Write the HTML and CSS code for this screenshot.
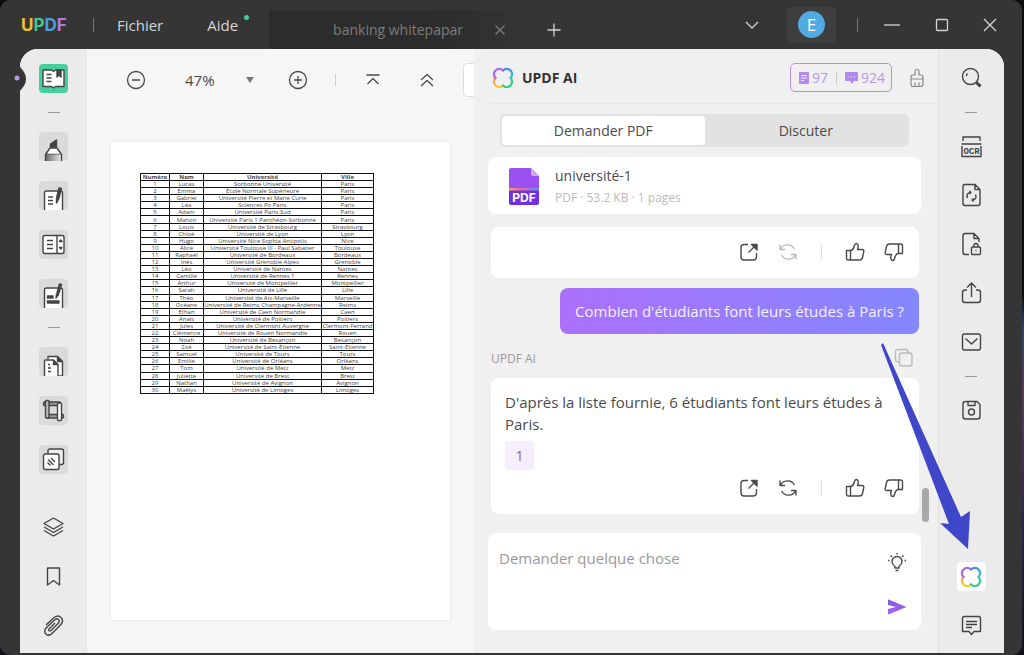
FILE: index.html
```html
<!DOCTYPE html>
<html lang="fr">
<head>
    <meta charset="utf-8">
    <title>UPDF</title>
    <link rel="stylesheet" href="styles.css">
</head>
<body>
    <!-- Icônes partagées -->
    <svg class="sprite" aria-hidden="true">
        <defs>
            <linearGradient id="purple" x1="0" y1="0" x2="0" y2="1">
                <stop offset="0" stop-color="#8457dc" />
                <stop offset="1" stop-color="#a667f5" />
            </linearGradient>
            <linearGradient id="blue-green" x1="0" y1="0" x2="0" y2="1">
                <stop offset="0" stop-color="#3d8fe8" />
                <stop offset="1" stop-color="#38cfc0" />
            </linearGradient>
            <linearGradient id="yellow-orange" x1="0" y1="0" x2="0" y2="1">
                <stop offset="0" stop-color="#ee9a5a" />
                <stop offset="1" stop-color="#f8cc30" />
            </linearGradient>
            <symbol id="ai-logo" viewBox="0 0 22 22">
                <g fill="none" stroke-width="2.3" stroke-linecap="round">
                    <path stroke="url(#yellow-orange)" d="M11 18.500A5 5 0 1 1 3.500 11" />
                    <path stroke="#3ec88a" d="M18.500 11A5 5 0 1 1 11 18.500" />
                    <path stroke="url(#blue-green)" d="M11 3.500A5 5 0 1 1 18.500 11" />
                    <path stroke="#a86be0" d="M3.500 11A5 5 0 1 1 11 3.500" />
                </g>
            </symbol>
            <symbol id="share" viewBox="0 0 20 20">
                <path d="M9 2.500H5Q2 2.500 2 5.500V15Q2 18 5 18H14Q17.500 18 17.500 14.500V11M9.500 10.500L16 4" />
                <path class="solid" d="M12.500 2.500H18V8Z" />
            </symbol>
            <symbol id="refresh" viewBox="0 0 20 20">
                <path d="M2 2.500V7.500H7M2.500 7.300C5 2 13 1 16.500 7M18 17.500V12.500H13M17.500 12.700C15 18 7 19 3.500 13" />
            </symbol>
            <symbol id="like" viewBox="0 0 20 20">
                <path d="M1.500 8.500H5.500V18H3.500Q1.500 18 1.500 16ZM5.500 9C8 8 9 6 9.500 3.500Q10 1.300 11.500 1.500C13.500 2 13.800 4.500 12.500 7.500H17Q19 7.500 18.800 9.500L17.500 15.500Q17 18 14.500 18H5.500" />
            </symbol>
            <symbol id="dislike" viewBox="0 0 20 20">
                <path d="M18.500 11.500H14.500V2H16.500Q18.500 2 18.500 4ZM14.500 11C12 12 11 14 10.500 16.500Q10 18.700 8.500 18.500C6.500 18 6.200 15.500 7.500 12.500H3Q1 12.500 1.200 10.500L2.500 4.500Q3 2 5.500 2H14.500" />
            </symbol>
        </defs>
    </svg>

    <div class="window">
        <!-- Barre de titre -->
        <header class="titlebar">
            <span class="brand"><span class="u">U</span><span class="p">P</span><span class="d">D</span><span class="f">F</span></span>
            <span class="bar"></span>
            <nav class="menu">
                <button class="menu-item">Fichier</button>
                <button class="menu-item new">Aide</button>
            </nav>
            <div class="tab">
                <span class="tab-name">banking whitepapar</span>
                <button class="plain" aria-label="Fermer l'onglet">
                    <svg width="12" height="12" viewBox="0 0 12 12"><path d="M1.500 1.500L10.500 10.500M10.500 1.500L1.500 10.500" /></svg>
                </button>
            </div>
            <button class="plain add" aria-label="Nouvel onglet">
                <svg width="16" height="16" viewBox="0 0 16 16"><path d="M8 1.500V14.500M1.500 8H14.500" /></svg>
            </button>
            <div class="window-tools">
                <button class="plain" aria-label="Onglets">
                    <svg width="16" height="16" viewBox="0 0 16 16"><path d="M2 5L8 11L14 5" /></svg>
                </button>
                <button class="account" aria-label="Compte"><span class="avatar">E</span></button>
                <span class="bar"></span>
                <button class="plain" aria-label="Réduire">
                    <svg width="18" height="16" viewBox="0 0 18 16"><path d="M1 8H17" /></svg>
                </button>
                <button class="plain" aria-label="Agrandir">
                    <svg width="14" height="14" viewBox="0 0 14 14"><rect x="1.500" y="1.500" width="11" height="11" rx="1" /></svg>
                </button>
                <button class="plain" aria-label="Fermer">
                    <svg width="14" height="14" viewBox="0 0 14 14"><path d="M1 1L13 13M13 1L1 13" /></svg>
                </button>
            </div>
        </header>

        <svg class="notch" viewBox="0 0 14 36" aria-hidden="true">
            <path fill="#353535" d="M0 0H5C5 7 13 9 13 18S5 28 5 36H0Z" />
            <circle cx="4" cy="17" r="2.500" fill="#b59ae6" />
        </svg>

        <div class="workspace">
            <!-- Outils de gauche -->
            <nav class="rail">
                <div class="group">
                    <button class="tool active" aria-label="Lecteur">
                        <svg viewBox="0 0 29 29"><path fill="#fff" d="M4 6H12.500L14.500 7.500L16.500 6H25V22.500H16.500L14.500 24L12.500 22.500H4Z" /><path class="solid" d="M18 6H22V13L20 11L18 13Z" /><path d="M7.500 10.500H12.500M7.500 14H12.500M7.500 17.500H12.500" /></svg>
                    </button>
                </div>
                <hr>
                <div class="group">
                    <button class="tool filled" aria-label="Commenter">
                        <svg viewBox="0 0 29 29"><defs><linearGradient id="ink"><stop offset="0" stop-color="#666" /><stop offset="1" stop-color="#eee" /></linearGradient></defs><path fill="#fff" d="M11 16H18L22.500 22.500H6.500Z" /><path fill="url(#ink)" d="M6.500 22.500H22.500V29H6.500Z" stroke="none" /><path class="solid" d="M11.500 15V12L17.500 8V15Z" /><path d="M6.500 29V22.500M22.500 29V22.500" /></svg>
                    </button>
                    <button class="tool filled" aria-label="Modifier">
                        <svg viewBox="0 0 29 29"><path fill="#fff" d="M5.500 29V12Q5.500 10 7.500 10H21.500Q23.500 10 23.500 12V29" /><path d="M9 16H14M9 19.500H14M9 23H14" /><path class="solid" d="M20 7L22.500 7.500L20 17H17.500ZM17.500 18L19.500 18.500L17.500 22Z" /></svg>
                    </button>
                    <button class="tool filled" aria-label="Formulaire">
                        <svg viewBox="0 0 29 29"><rect fill="#fff" x="4" y="5.500" width="21" height="18" rx="2" /><path d="M18 5.500V23.500M8 10.500H14M8 14.500H14M8 18.500H14" /><path d="M20.500 11.500L21.800 10L23 11.500ZM20.500 17.500L21.800 19L23 17.500Z" /></svg>
                    </button>
                    <button class="tool filled" aria-label="Caviarder">
                        <svg viewBox="0 0 29 29"><path fill="#fff" d="M5.500 29V11Q5.500 9 7.500 9H21.500Q23.500 9 23.500 11V29" /><path class="solid" d="M8.500 17H14V19H8.500ZM8.500 22H20V24H8.500ZM20.500 5L22.500 5.500L20 14L18 13.500ZM17.500 15L19.500 15.500L17 19Z" /></svg>
                    </button>
                </div>
                <hr>
                <div class="group">
                    <button class="tool filled" aria-label="Organiser">
                        <svg viewBox="0 0 29 29"><path fill="#fff" d="M9 12V9.500H18.500L23.500 14.500V29H9" /><path class="solid" d="M18.500 10V14.500H23Z" /><path fill="#fff" d="M5.500 29V14Q5.500 13 6.500 13H14.500L19 17.500V29" /><path class="solid" d="M14.500 13.500V17.500H18.500Z" /><path d="M9 17.500H11M9 21H12M9 24.500H12" /></svg>
                    </button>
                    <button class="tool filled" aria-label="Rogner">
                        <svg viewBox="0 0 29 29"><rect fill="#999" x="4.500" y="6" width="17" height="3.500" rx="1" /><rect fill="#999" x="8" y="18.500" width="16.500" height="3.500" rx="1" /><rect fill="#bbb" x="6.500" y="4.500" width="3.500" height="17.500" rx="1" /><rect fill="#fff" x="18.500" y="7" width="4" height="17.500" rx="1" /></svg>
                    </button>
                    <button class="tool filled" aria-label="Filigrane">
                        <svg viewBox="0 0 29 29"><rect fill="#eee" x="9" y="4" width="15.500" height="15.500" rx="2" /><rect fill="#fff" x="4.500" y="9" width="15.500" height="15.500" rx="2" /><path d="M9 14.500L14.500 20M12 13L16 17M8.500 17.500L11.500 20.500" /></svg>
                    </button>
                </div>
                <div class="group end">
                    <button class="tool" aria-label="Calques">
                        <svg viewBox="0 0 29 29"><path d="M14.500 5L24 10.500L14.500 16L5 10.500ZM5 14L14.500 19.500L24 14M5 17.500L14.500 23L24 17.500" /></svg>
                    </button>
                    <button class="tool" aria-label="Signets">
                        <svg viewBox="0 0 29 29"><path d="M8.500 6H20.500V23L14.500 18.500L8.500 23Z" /></svg>
                    </button>
                    <button class="tool" aria-label="Pièces jointes">
                        <svg viewBox="0 0 29 29"><path d="M7 14L14 7.500C17 4.500 20 4.500 22 6.500C24.500 9 23.500 12 21.500 14L13 22.500C11 24.500 8.500 24.500 7 23C5 21 5.500 18.500 7.500 16.500L15.500 9C17 7.500 18.500 7.500 19.500 8.500C20.500 9.500 20.500 11 19 12.500L12 19.500C10.500 20.500 9 19.500 10 18L16 12" /></svg>
                    </button>
                </div>
            </nav>

            <!-- Document -->
            <main class="viewer">
                <div class="toolbar">
                    <button class="plain" aria-label="Zoom arrière">
                        <svg width="20" height="20" viewBox="0 0 20 20"><circle cx="10" cy="10" r="8.500" /><path d="M6 10H14" /></svg>
                    </button>
                    <button class="zoom">47% <svg width="10" height="6" viewBox="0 0 10 6"><path d="M1 0H9L5 6Z" /></svg></button>
                    <button class="plain" aria-label="Zoom avant">
                        <svg width="20" height="20" viewBox="0 0 20 20"><circle cx="10" cy="10" r="8.500" /><path d="M6 10H14M10 6V14" /></svg>
                    </button>
                    <span class="bar"></span>
                    <button class="plain" aria-label="Première page">
                        <svg width="16" height="16" viewBox="0 0 16 16"><path d="M1.500 3H14.500M2.500 12L8 6.500L13.500 12" /></svg>
                    </button>
                    <button class="plain up" aria-label="Page précédente">
                        <svg width="16" height="16" viewBox="0 0 16 16"><path d="M2 8L8 2.500L14 8M2 14L8 8.500L14 14" /></svg>
                    </button>
                    <input class="page-number" type="text" aria-label="Page">
                </div>
                <div class="sheet">
                    <table>
                        <thead>
                            <tr><th class="num">Numéro</th><th class="name">Nom</th><th>Université</th><th class="city">Ville</th></tr>
                        </thead>
                        <tbody>
                            <tr><td>1</td><td>Lucas</td><td>Sorbonne Université</td><td>Paris</td></tr>
                            <tr><td>2</td><td>Emma</td><td>École Normale Supérieure</td><td>Paris</td></tr>
                            <tr><td>3</td><td>Gabriel</td><td>Université Pierre et Marie Curie</td><td>Paris</td></tr>
                            <tr><td>4</td><td>Léa</td><td>Sciences Po Paris</td><td>Paris</td></tr>
                            <tr><td>5</td><td>Adam</td><td>Université Paris-Sud</td><td>Paris</td></tr>
                            <tr><td>6</td><td>Manon</td><td>Université Paris 1 Panthéon-Sorbonne</td><td>Paris</td></tr>
                            <tr><td>7</td><td>Louis</td><td>Université de Strasbourg</td><td>Strasbourg</td></tr>
                            <tr><td>8</td><td>Chloé</td><td>Université de Lyon</td><td>Lyon</td></tr>
                            <tr><td>9</td><td>Hugo</td><td>Université Nice Sophia Antipolis</td><td>Nice</td></tr>
                            <tr><td>10</td><td>Alice</td><td>Université Toulouse III - Paul Sabatier</td><td>Toulouse</td></tr>
                            <tr><td>11</td><td>Raphaël</td><td>Université de Bordeaux</td><td>Bordeaux</td></tr>
                            <tr><td>12</td><td>Inès</td><td>Université Grenoble Alpes</td><td>Grenoble</td></tr>
                            <tr><td>13</td><td>Léo</td><td>Université de Nantes</td><td>Nantes</td></tr>
                            <tr><td>14</td><td>Camille</td><td>Université de Rennes 1</td><td>Rennes</td></tr>
                            <tr><td>15</td><td>Arthur</td><td>Université de Montpellier</td><td>Montpellier</td></tr>
                            <tr><td>16</td><td>Sarah</td><td>Université de Lille</td><td>Lille</td></tr>
                            <tr><td>17</td><td>Théo</td><td>Université de Aix-Marseille</td><td>Marseille</td></tr>
                            <tr><td>18</td><td>Océane</td><td>Université de Reims Champagne-Ardenne</td><td>Reims</td></tr>
                            <tr><td>19</td><td>Ethan</td><td>Université de Caen Normandie</td><td>Caen</td></tr>
                            <tr><td>20</td><td>Anaïs</td><td>Université de Poitiers</td><td>Poitiers</td></tr>
                            <tr><td>21</td><td>Jules</td><td>Université de Clermont Auvergne</td><td>Clermont-Ferrand</td></tr>
                            <tr><td>22</td><td>Clémence</td><td>Université de Rouen Normandie</td><td>Rouen</td></tr>
                            <tr><td>23</td><td>Noah</td><td>Université de Besançon</td><td>Besançon</td></tr>
                            <tr><td>24</td><td>Zoé</td><td>Université de Saint-Étienne</td><td>Saint-Étienne</td></tr>
                            <tr><td>25</td><td>Samuel</td><td>Université de Tours</td><td>Tours</td></tr>
                            <tr><td>26</td><td>Emilie</td><td>Université de Orléans</td><td>Orléans</td></tr>
                            <tr><td>27</td><td>Tom</td><td>Université de Metz</td><td>Metz</td></tr>
                            <tr><td>28</td><td>Juliette</td><td>Université de Brest</td><td>Brest</td></tr>
                            <tr><td>29</td><td>Nathan</td><td>Université de Avignon</td><td>Avignon</td></tr>
                            <tr><td>30</td><td>Maëlys</td><td>Université de Limoges</td><td>Limoges</td></tr>
                        </tbody>
                    </table>
                </div>
            </main>

            <!-- Panneau UPDF AI -->
            <aside class="assistant">
                <div class="assistant-head">
                    <svg width="22" height="22"><use href="#ai-logo" /></svg>
                    <h1>UPDF AI</h1>
                    <div class="credits">
                        <svg width="12" height="14" viewBox="0 0 12 14"><rect x="1" y="1" width="10" height="12" rx="1" /><path d="M3 4.500H9M3 7H9M3 9.500H6" /></svg>
                        <span>97</span>
                        <span class="bar"></span>
                        <svg width="15" height="14" viewBox="0 0 15 14"><path class="bubble" d="M2 1H13Q14 1 14 2V10H10L8 13L6 10H1V2Q1 1 2 1Z" /><path d="M4 6H5M7 6H8M10 6H11" /></svg>
                        <span>924</span>
                    </div>
                    <button class="plain" aria-label="Effacer">
                        <svg width="16" height="20" viewBox="0 0 16 20"><path d="M6 7V3Q6 1.500 8 1.500T10 3V7H12Q14 7 14 9V11H2V9Q2 7 4 7ZM2 11V16Q2 18.500 4 18.500H12Q14 18.500 14 16V11M6 18V14.500M10 18V14.500" /></svg>
                    </button>
                </div>

                <div class="assistant-body">
                    <div class="modes">
                        <button class="mode selected">Demander PDF</button>
                        <button class="mode">Discuter</button>
                    </div>

                    <div class="file-card">
                        <svg width="30" height="38" viewBox="0 0 30 38">
                            <defs>
                                <linearGradient id="stripe"><stop offset="0" stop-color="#f4a24f" /><stop offset=".4" stop-color="#e86ca0" /><stop offset="1" stop-color="#5b8df5" /></linearGradient>
                            </defs>
                            <path fill="#9a50f0" d="M2 0H22L30 8V24H0V2Q0 0 2 0Z" />
                            <path fill="#d0a8fa" d="M22 0L30 8H24Q22 8 22 6Z" />
                            <path fill="url(#stripe)" d="M0 20H30V23H0Z" />
                            <path fill="#7430de" d="M0 22.500H30V35Q30 37 28 37H2Q0 37 0 35Z" />
                            <text x="15" y="34" text-anchor="middle">PDF</text>
                        </svg>
                        <div>
                            <div class="file-name">université-1</div>
                            <div class="file-info">PDF · 53.2 KB · 1 pages</div>
                        </div>
                    </div>

                    <div class="chat">
                        <div class="answer">
                            <div class="actions">
                                <button class="plain" aria-label="Partager"><svg width="20" height="20"><use href="#share" /></svg></button>
                                <button class="plain off" aria-label="Régénérer" disabled><svg width="20" height="20"><use href="#refresh" /></svg></button>
                                <span class="bar"></span>
                                <button class="plain" aria-label="J'aime"><svg width="20" height="20"><use href="#like" /></svg></button>
                                <button class="plain" aria-label="Je n'aime pas"><svg width="20" height="20"><use href="#dislike" /></svg></button>
                            </div>
                        </div>

                        <div class="question">Combien d'étudiants font leurs études à Paris ?</div>

                        <div class="author">
                            <span>UPDF AI</span>
                            <button class="plain" aria-label="Copier">
                                <svg width="20" height="20" viewBox="0 0 20 20"><path d="M6 14H4Q1.500 14 1.500 11.500V4Q1.500 1.500 4 1.500H11.500Q14 1.500 14 4V5" /><rect x="5.500" y="5" width="12.500" height="13" rx="2.500" /></svg>
                            </button>
                        </div>

                        <div class="answer">
                            <p>D'après la liste fournie, 6 étudiants font leurs études à Paris.</p>
                            <a class="page-ref" href="#">1</a>
                            <div class="actions">
                                <button class="plain" aria-label="Partager"><svg width="20" height="20"><use href="#share" /></svg></button>
                                <button class="plain" aria-label="Régénérer"><svg width="20" height="20"><use href="#refresh" /></svg></button>
                                <span class="bar"></span>
                                <button class="plain" aria-label="J'aime"><svg width="20" height="20"><use href="#like" /></svg></button>
                                <button class="plain" aria-label="Je n'aime pas"><svg width="20" height="20"><use href="#dislike" /></svg></button>
                            </div>
                        </div>
                        <span class="scroll-thumb"></span>
                    </div>

                    <form class="composer">
                        <textarea placeholder="Demander quelque chose" aria-label="Votre question"></textarea>
                        <div class="composer-tools">
                            <button class="plain" type="button" aria-label="Idées">
                                <svg width="20" height="20" viewBox="0 0 20 20"><path d="M8 16V14.500C6 13 5 11.500 5 9.500A5 5 0 0 1 15 9.500C15 11.500 14 13 12 14.500V16ZM8.500 18.500H11.500M10 1V2.500M3.500 3.500L5 5M16.500 3.500L15 5M1 8.500H2.500M17.500 8.500H19" /></svg>
                            </button>
                            <button class="plain" type="submit" aria-label="Envoyer">
                                <svg width="20" height="16" viewBox="0 0 20 16"><path fill="url(#purple)" stroke="none" d="M1.500 0.500L19.500 8L1.500 15.500Q1 15.500 1 14.500V10L9 8L1 6V1.500Q1 0.500 1.500 0.500Z" /></svg>
                            </button>
                        </div>
                    </form>
                </div>
            </aside>

            <!-- Outils de droite -->
            <nav class="rail right">
                <div class="group">
                    <button class="tool" aria-label="Rechercher">
                        <svg viewBox="0 0 29 29"><circle cx="13.500" cy="12.500" r="8" /><path d="M9.500 12Q9.500 10 10.500 9.500" /><path d="M19.500 18.500L23.500 22.500" stroke-width="3" /></svg>
                    </button>
                </div>
                <hr>
                <div class="group">
                    <button class="tool" aria-label="OCR">
                        <svg viewBox="0 0 29 29"><path d="M6 9V5H23V9M4.500 12H24.500M5 14V24.500H24V14" /><text x="14.500" y="22" text-anchor="middle">OCR</text></svg>
                    </button>
                    <button class="tool" aria-label="Convertir">
                        <svg viewBox="0 0 29 29"><path d="M8 3.500H18L23 8.500V22Q23 24.500 21 24.500H8Q6 24.500 6 22V6Q6 3.500 8 3.500ZM18 3.500V8.500H23M10.500 17C9 13.500 11 11.500 14 11.500L12.500 10M14 11.500L12.500 13M18.500 13.500C20 17 18 19 15 19L16.500 17.500M15 19L16.500 20.500" /></svg>
                    </button>
                    <button class="tool" aria-label="Protéger">
                        <svg viewBox="0 0 29 29"><path d="M12 24.500H8Q6 24.500 6 22V6Q6 3.500 8 3.500H17L22 8.500V12M17 3.500V8.500H22M17 17V15.500Q17 13.500 19 13.500T21 15.500V17" /><rect x="14.500" y="17" width="9" height="7.500" rx="1" /><path d="M18.500 20.500H19.500" /></svg>
                    </button>
                    <button class="tool" aria-label="Partager">
                        <svg viewBox="0 0 29 29"><path d="M10 11H8Q5.500 11 5.500 13.500V21Q5.500 23.500 8 23.500H21Q23.500 23.500 23.500 21V13.500Q23.500 11 21 11H19M14.500 18V4.500M10 8.500L14.500 4L19 8.500" /></svg>
                    </button>
                    <button class="tool" aria-label="Envoyer par e-mail">
                        <svg viewBox="0 0 29 29"><rect x="5.500" y="6" width="18" height="16" rx="2" /><path d="M8.500 10.500L14.500 16L20.500 10.500" /></svg>
                    </button>
                </div>
                <hr>
                <div class="group">
                    <button class="tool" aria-label="Enregistrer">
                        <svg viewBox="0 0 29 29"><path d="M8.500 5.500H20L23 8.500V20.500Q23 23 20.500 23H8.500Q6 23 6 20.500V8Q6 5.500 8.500 5.500ZM11 5.500V9.500H18V5.500" /><circle cx="14.500" cy="16" r="3" /></svg>
                    </button>
                </div>
                <div class="group end">
                    <button class="tool ai" aria-label="UPDF AI"><svg width="22" height="22"><use href="#ai-logo" /></svg></button>
                    <button class="tool" aria-label="Commentaires">
                        <svg viewBox="0 0 29 29"><path d="M7.500 5.500H21.500Q23.500 5.500 23.500 7.500V20.500H17L14.500 23.500L12 20.500H5.500V7.500Q5.500 5.500 7.500 5.500ZM9 10.500H20M9 13.500H20M9 16.500H15" /></svg>
                    </button>
                </div>
            </nav>
        </div>

        <!-- Flèche vers le bouton UPDF AI -->
        <svg class="arrow" viewBox="0 0 90 206" aria-hidden="true">
            <path fill="#4046c8" d="M0 2L2 0L80 174L89 168L87 206L59 180L68 181Z" />
        </svg>
    </div>
</body>
</html>
```
FILE: styles.css
```css
* {
  box-sizing: border-box;
}

body {
  margin: 0;
  background: linear-gradient(#0c0c0e 45%, #33406a 50%, #5a3c58 60%, #2c2452 80%, #101018);
  font-family: "Open Sans", "Noto Sans", sans-serif;
  font-size: 15px;
  color: #4a4a4a;
}

button {
  font: inherit;
  color: inherit;
  border: 0;
  padding: 0;
  background: none;
}

svg {
  display: block;
  fill: none;
  stroke: currentColor;
  stroke-width: 1.4;
  stroke-linejoin: round;
}

.sprite {
  position: absolute;
  width: 0;
  height: 0;
}

.solid {
  fill: currentColor;
}

.plain {
  display: flex;
  flex: none;
}

.bar {
  flex: none;
  width: 1px;
  height: 14px;
  background: #777;
}

.window {
  position: relative;
  display: flex;
  flex-direction: column;
  min-height: 100vh;
  margin-right: 2px;
  padding: 0 18px 2px 20px;
  background: #353535;
  border-radius: 10px;
}

/* Barre de titre */
.titlebar {
  display: flex;
  align-items: center;
  height: 49px;
  color: #d4d4d4;
}

.titlebar svg {
  stroke-width: 1.3;
}

.brand {
  width: 73px;
  padding-left: 1px;
  font-family: Inter, sans-serif;
  font-size: 17px;
  font-weight: 700;
}

.u { color: #f0c030; }
.p { color: #45c58c; }
.d { color: #4a9fdc; }
.f { color: #b07ce0; }

.menu {
  display: flex;
  gap: 44px;
  width: 175px;
  padding-left: 23px;
}

.menu-item {
  position: relative;
}

.new::after {
  content: "";
  position: absolute;
  top: 0;
  right: -11px;
  width: 5px;
  height: 5px;
  border-radius: 50%;
  background: #45c99a;
}

.tab {
  display: flex;
  align-items: center;
  justify-content: flex-end;
  gap: 31px;
  width: 265px;
  height: 39px;
  margin-top: 10px;
  padding-right: 28px;
  background: linear-gradient(90deg, #2c2c2c 60%, #353535);
  color: #7c7c7c;
  font-size: 14px;
}

.add {
  margin: 10px 0 0 12px;
}

.window-tools {
  display: flex;
  align-items: center;
  margin-left: auto;
  padding-right: 7px;
}

.account {
  width: 49px;
  height: 36px;
  margin: 0 21px 0 27px;
  padding-left: 11px;
  border-radius: 4px;
  background: #3e3e3e;
}

.avatar {
  display: block;
  width: 27px;
  height: 27px;
  border-radius: 50%;
  background: #4fabe2;
  color: #fff;
  font-size: 17px;
  line-height: 27px;
}

.window-tools .bar + .plain {
  margin-left: 25px;
}

.window-tools .plain + .plain {
  margin-left: 34px;
}

/* Poignée sur le bord gauche */
.notch {
  position: absolute;
  left: 13px;
  top: 61px;
  width: 14px;
  height: 36px;
  stroke: none;
  z-index: 1;
}

.workspace {
  display: grid;
  grid-template-columns: 67px minmax(0, 1fr) 464px 66px;
  flex: 1;
  overflow: hidden;
  border-radius: 18px 18px 0 0;
  background: #f0f0f0;
}

/* Colonnes d'outils */
.rail {
  display: flex;
  flex-direction: column;
  align-items: center;
  padding: 15px 0 13px;
  background: #ebebeb;
  color: #444;
  box-shadow: inset -1px 0 #e6e6e6;
}

.rail.right {
  box-shadow: inset 1px 0 #e2e2e2;
}

.rail hr {
  width: 12px;
  height: 1px;
  margin: 19px 0;
  border: 0;
  background: #999;
}

.group {
  display: grid;
  gap: 20px;
}

.end {
  margin-top: auto;
}

.tool {
  width: 29px;
  height: 29px;
  border-radius: 4px;
}

.tool text {
  font-family: "Liberation Mono", monospace;
  font-size: 9px;
  font-weight: 700;
  fill: currentColor;
  stroke: none;
}

.filled {
  background: #dadada;
}

.active {
  background: #46cf9c;
}

.ai {
  display: grid;
  place-items: center;
  background: #fff;
}

/* Document */
.viewer {
  padding: 0 0 33px;
  background: #f6f6f6;
}

.toolbar {
  display: flex;
  align-items: center;
  height: 34px;
  margin: 14px 0 45px;
  padding-left: 39px;
  overflow: hidden;
}

.toolbar svg {
  stroke-width: 1.3;
}

.toolbar .bar {
  height: 12px;
  margin: 0 29px 0 27px;
  background: #ccc;
}

.zoom {
  display: flex;
  align-items: center;
  gap: 30px;
  margin: 0 33px 0 39px;
}

.zoom svg {
  fill: #777;
  stroke: none;
}

.up {
  margin: 0 28px 0 38px;
}

.page-number {
  flex: none;
  width: 44px;
  height: 34px;
  border: 1px solid #ddd;
  border-radius: 4px;
  background: #fff;
}

.sheet {
  height: 478px;
  margin: 0 24px;
  padding: 31px 76px 0 29px;
  background: #fff;
  box-shadow: 0 0 3px rgba(0, 0, 0, 0.1);
}

table {
  width: 100%;
  height: 221px;
  table-layout: fixed;
  border-collapse: collapse;
  color: #444;
  font-size: 6px;
  line-height: 6px;
  text-align: center;
}

th, td {
  padding: 0;
  border: 1px solid #111;
  white-space: nowrap;
}

.num { width: 29px; }
.name { width: 34px; }
.city { width: 52px; }

/* Panneau UPDF AI */
.assistant-head {
  display: flex;
  align-items: center;
  height: 55px;
  margin-left: 16px;
  padding: 3px 13px 0 2px;
  border-bottom: 1px solid #e6e6e6;
}

h1 {
  margin: 0 auto 0 8px;
  font-size: 14px;
  color: #333;
}

.credits {
  display: flex;
  align-items: center;
  gap: 2px;
  height: 29px;
  margin-right: 17px;
  padding: 0 6px 0 7px;
  border: 1px solid #b092ee;
  border-radius: 5px;
  color: #b49ae0;
  font-size: 14px;
}

.credits svg {
  stroke: #f0f0f0;
  stroke-width: 1;
}

.credits rect, .bubble {
  fill: #b18af0;
  stroke: none;
}

.credits .bar {
  margin: 0 5px 0 6px;
  background: #ccc;
}

.assistant-head .plain {
  color: #888;
}

.assistant-head .plain svg {
  stroke-width: 1.2;
}

.assistant-body {
  display: flex;
  flex-direction: column;
  padding: 10px 17px 23px 14px;
}

.modes {
  display: flex;
  height: 33px;
  margin: 0 12px 10px;
  padding: 2px;
  border-radius: 5px;
  background: #e2e2e2;
}

.mode {
  flex: 1;
  border-radius: 4px;
  font-size: 14px;
}

.selected {
  background: #fff;
}

.file-card {
  display: flex;
  align-items: center;
  gap: 16px;
  height: 57px;
  padding: 3px 21px 0;
  border-radius: 8px;
  background: #fff;
}

.file-card svg {
  stroke: none;
}

.file-card text {
  fill: #fff;
  font-family: Inter, sans-serif;
  font-size: 12px;
  font-weight: 700;
}

.file-name {
  font-size: 14px;
  line-height: 22px;
}

.file-info {
  color: #bbb;
  font-size: 12px;
  line-height: 22px;
}

.chat {
  position: relative;
  display: flex;
  flex-direction: column;
  gap: 10px;
  margin: 0 2px 19px 3px;
  padding-top: 13px;
}

.answer {
  padding: 13px 15px 15px 14px;
  border-radius: 8px;
  background: #fff;
}

.answer p {
  margin: 0;
  line-height: 22px;
}

.actions {
  display: flex;
  align-items: center;
  justify-content: flex-end;
  min-height: 23px;
  gap: 19px;
}

.actions .bar {
  margin: 0 4px;
  background: #ddd;
}

.off {
  color: #bbb;
}

.question {
  align-self: flex-end;
  padding: 12px 15px;
  border-radius: 8px;
  background: linear-gradient(100deg, #ab70fa, #8488ff);
  color: #f4f0ff;
  line-height: 22px;
}

.author {
  display: flex;
  align-items: center;
  justify-content: space-between;
  height: 24px;
  padding: 4px 5px 0 0;
  color: #999;
  font-size: 12px;
}

.author svg {
  color: #bbb;
}

.page-ref {
  display: block;
  width: 29px;
  height: 29px;
  margin: 6px 0;
  border-radius: 4px;
  background: #f5effd;
  color: #9263c8;
  line-height: 29px;
  text-align: center;
  text-decoration: none;
}

.scroll-thumb {
  position: absolute;
  right: -10px;
  bottom: -8px;
  width: 7px;
  height: 34px;
  border-radius: 4px;
  background: #a8a8a8;
}

.composer {
  display: flex;
  height: 97px;
  padding: 14px;
  border-radius: 8px;
  background: #fff;
}

textarea {
  flex: 1;
  padding: 0;
  margin-left: -3px;
  border: 0;
  outline: 0;
  resize: none;
  font: inherit;
  line-height: 22px;
}

textarea::placeholder {
  color: #999;
}

.composer-tools {
  display: flex;
  flex-direction: column;
  justify-content: space-between;
  padding: 5px 0 1px;
}

.arrow {
  position: absolute;
  right: 51px;
  top: 343px;
  width: 90px;
  height: 206px;
  stroke: none;
}
```
